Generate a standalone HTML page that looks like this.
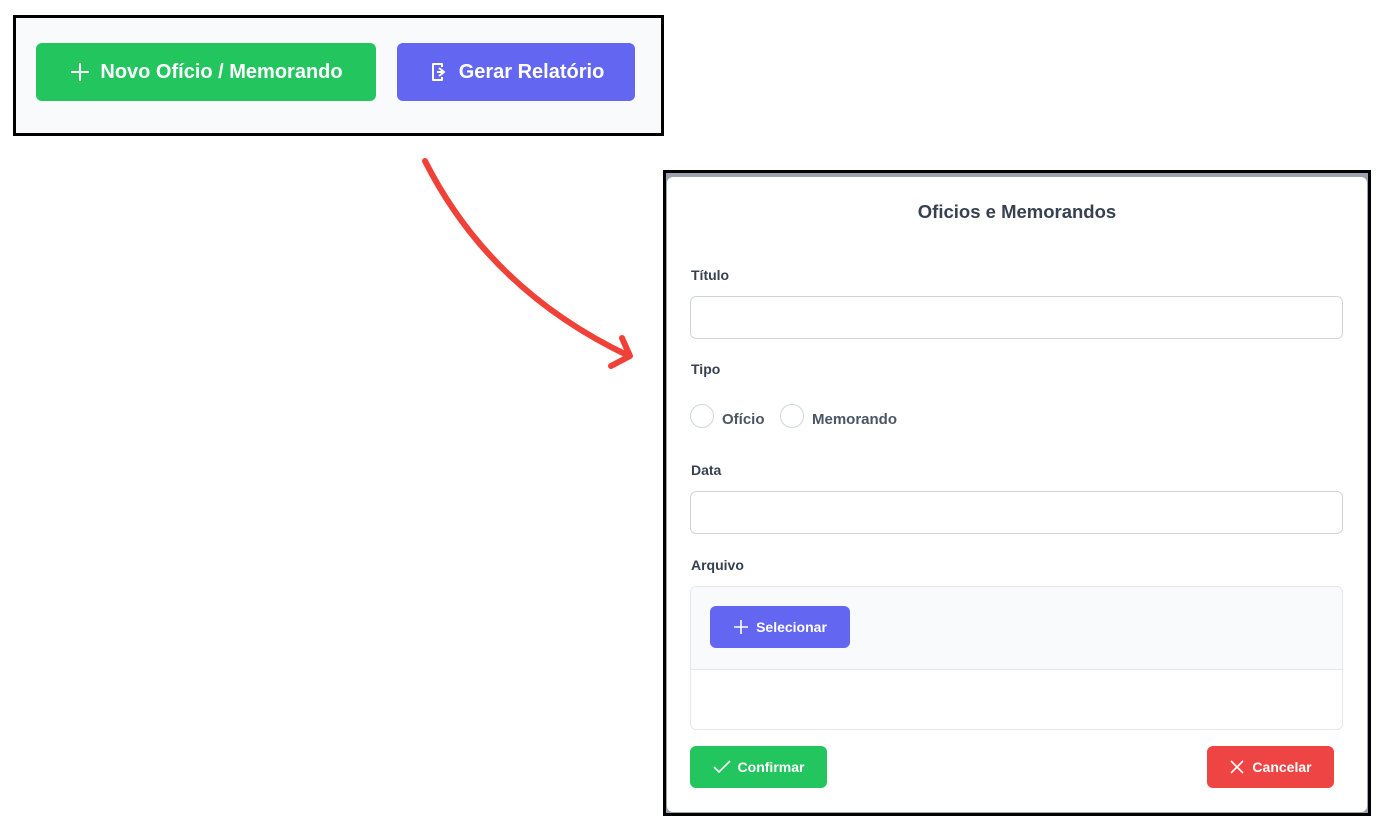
<!DOCTYPE html>
<html><head><meta charset="utf-8"><style>
body{margin:0;width:1378px;height:827px;background:#fff;position:relative;overflow:hidden;font-family:"Liberation Sans",Arial,sans-serif}
.a{position:absolute;box-sizing:border-box}
.btn{position:absolute;box-sizing:border-box;color:#fff;font-weight:bold;display:flex;align-items:center;justify-content:center;border-radius:6px}
.lbl{position:absolute;left:691px;font-size:14px;font-weight:bold;color:#374151}
.inp{position:absolute;left:690px;width:653px;height:43px;border:1px solid #d1d5db;border-radius:6px;box-sizing:border-box;background:#fff}
.rad{position:absolute;width:24px;height:24px;border:1.5px solid #d1d5db;border-radius:50%;box-sizing:border-box;top:404px}
</style></head><body>
<div class="a" style="left:13px;top:15px;width:651px;height:121px;border:3px solid #000;background:#f8fafc"></div>
<div class="btn" style="left:36px;top:43px;width:340px;height:58px;background:#22c55e;font-size:20px">
<svg width="22" height="22" viewBox="0 0 22 22" style="margin-right:9px"><path d="M11 2v18M2 11h18" stroke="#fff" stroke-width="2"/></svg>Novo Ofício / Memorando</div>
<div class="btn" style="left:397px;top:43px;width:238px;height:58px;background:#6366f1;font-size:20px">
<svg width="22" height="22" viewBox="0 0 22 22" style="margin-right:9px"><path d="M14 6V3H5v16h9v-3M11 7l5 4-5 4M16 11H9" stroke="#fff" stroke-width="2" fill="none" stroke-linejoin="round"/></svg>Gerar Relatório</div>

<svg class="a" style="left:0;top:0" width="1378" height="827"><path d="M425 161 Q490 290 629 356" stroke="#ef4137" stroke-width="6" fill="none" stroke-linecap="round"/><path d="M611 366 L630 356 L622 338" stroke="#ef4137" stroke-width="6" fill="none" stroke-linecap="round" stroke-linejoin="round"/></svg>

<div class="a" style="left:663px;top:170px;width:708px;height:646px;border:3px solid #000;background:#9ca3af"></div>
<div class="a" style="left:667px;top:177px;width:700px;height:635px;background:#fff;border-radius:6px"></div>
<div class="a" style="left:668px;top:201px;width:698px;text-align:center;font-size:18.5px;font-weight:bold;color:#374151">Oficios e Memorandos</div>
<div class="lbl" style="top:267px">Título</div>
<div class="inp" style="top:296px"></div>
<div class="lbl" style="top:361px">Tipo</div>
<div class="rad" style="left:690px"></div>
<div class="a" style="left:722px;top:411px;font-size:15px;font-weight:bold;color:#4b5563">Ofício</div>
<div class="rad" style="left:780px"></div>
<div class="a" style="left:812px;top:411px;font-size:15px;font-weight:bold;color:#4b5563">Memorando</div>
<div class="lbl" style="top:462px">Data</div>
<div class="inp" style="top:491px"></div>
<div class="lbl" style="top:557px">Arquivo</div>
<div class="a" style="left:690px;top:586px;width:653px;height:144px;border:1px solid #e5e7eb;border-radius:6px;overflow:hidden">
<div style="height:82px;background:#f8fafc;border-bottom:1px solid #e5e7eb"></div></div>
<div class="btn" style="left:710px;top:606px;width:140px;height:42px;background:#6366f1;font-size:14px">
<svg width="16" height="16" viewBox="0 0 16 16" style="margin-right:7px"><path d="M8 1v14M1 8h14" stroke="#fff" stroke-width="1.6"/></svg>Selecionar</div>
<div class="btn" style="left:690px;top:746px;width:137px;height:42px;background:#22c55e;font-size:14px">
<svg width="18" height="16" viewBox="0 0 18 16" style="margin-right:7px"><path d="M1 8l5 5L17 2" stroke="#fff" stroke-width="1.6" fill="none"/></svg>Confirmar</div>
<div class="btn" style="left:1207px;top:746px;width:127px;height:42px;background:#ef4444;font-size:14px">
<svg width="16" height="16" viewBox="0 0 16 16" style="margin-right:7px"><path d="M2 2l12 12M14 2L2 14" stroke="#fff" stroke-width="1.6"/></svg>Cancelar</div>
</body></html>
